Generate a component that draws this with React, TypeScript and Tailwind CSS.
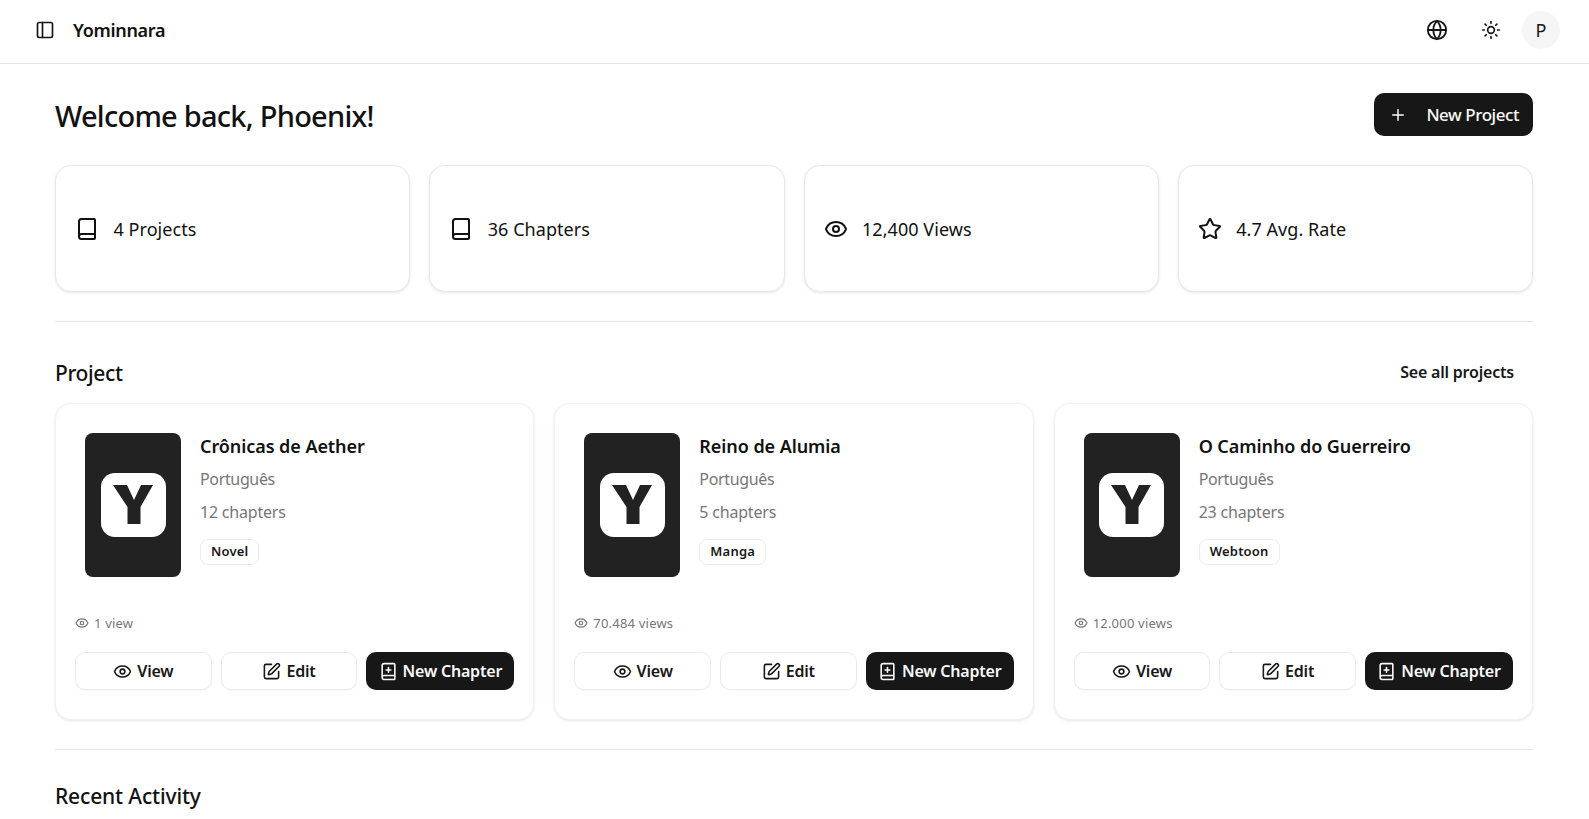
import { PanelLeft, Globe, Sun, Plus, Book, Eye, Star, SquarePen, BookPlus } from "lucide-react";

const stats = [
  { Icon: Book, label: "4 Projects" },
  { Icon: Book, label: "36 Chapters" },
  { Icon: Eye, label: "12,400 Views" },
  { Icon: Star, label: "4.7 Avg. Rate" },
];

const projects = [
  { title: "Crônicas de Aether", chapters: "12 chapters", tag: "Novel", views: "1 view" },
  { title: "Reino de Alumia", chapters: "5 chapters", tag: "Manga", views: "70.484 views" },
  { title: "O Caminho do Guerreiro", chapters: "23 chapters", tag: "Webtoon", views: "12.000 views" },
];

function Cover() {
  return (
    <div className="flex h-[144px] w-[96px] shrink-0 items-center justify-center rounded-lg bg-[#222222]">
      <svg width="65" height="64" viewBox="0 0 65 64" aria-hidden="true">
        <rect width="65" height="64" rx="14" fill="#ffffff" />
        <polygon points="12,12 26,12 33,27 40,12 52,12 39.5,34 39.5,51 26.5,51 26.5,34" fill="#222222" />
      </svg>
    </div>
  );
}

function ProjectCard({ title, chapters, tag, views }: { title: string; chapters: string; tag: string; views: string }) {
  return (
    <div className="flex h-[317px] flex-col rounded-2xl border border-[#f2f2f2] bg-white px-[19px] pb-[29px] pt-[29px] shadow-[0_1px_3px_rgba(0,0,0,0.1)]">
      <div className="flex gap-[19px] pl-[10px]">
        <Cover />
        <div className="flex flex-col items-start">
          <h3 className="mt-[1px] text-[18px] leading-[24px] font-semibold tracking-[-0.07px] text-[#111111]">{title}</h3>
          <p className="mt-[9px] text-[16px] leading-[24px] tracking-[-0.35px] text-[#77757a]">Português</p>
          <p className="mt-[9px] text-[16px] leading-[24px] tracking-[-0.2px] text-[#77757a]">{chapters}</p>
          <span className="mt-[15px] flex h-[26px] items-center rounded-lg border border-[#ebebeb] px-[10px] text-[13px] font-semibold tracking-[0.2px] text-[#171717]">
            {tag}
          </span>
        </div>
      </div>
      <div className="mt-auto flex items-center gap-[5px] text-[13px] leading-[18px] tracking-[0.2px] text-[#77757a]">
        <Eye size={14} strokeWidth={2} />
        <span>{views}</span>
      </div>
      <div className="mt-[20px] flex gap-[9px]">
        <button className="flex h-[38px] flex-1 items-center justify-center gap-[5px] rounded-[10px] border border-[#ebebeb] bg-white text-[16px] font-semibold tracking-[-0.2px] text-[#171717] shadow-[0_1px_1px_rgba(0,0,0,0.03)]">
          <Eye size={19} strokeWidth={2} />
          View
        </button>
        <button className="flex h-[38px] flex-1 items-center justify-center gap-[5px] rounded-[10px] border border-[#ebebeb] bg-white text-[16px] font-semibold tracking-[-0.2px] text-[#171717] shadow-[0_1px_1px_rgba(0,0,0,0.03)]">
          <SquarePen size={19} strokeWidth={2} />
          Edit
        </button>
        <button className="flex h-[38px] w-[148px] shrink-0 items-center justify-center gap-[5px] rounded-[10px] bg-[#171717] text-[16px] font-semibold tracking-[-0.2px] whitespace-nowrap text-[#fafafa]">
          <BookPlus size={19} strokeWidth={2} />
          New Chapter
        </button>
      </div>
    </div>
  );
}

export default function App() {
  return (
    <div className="h-screen overflow-hidden bg-white font-['Noto_Sans',sans-serif] text-[#111111]">
      <header className="flex h-16 items-center justify-between border-b border-[#e5e5e5] pb-[3px] pl-[35px] pr-[29px]">
        <div className="flex items-center gap-[18px]">
          <PanelLeft size={20} strokeWidth={2} className="text-[#171717]" />
          <span className="text-[18px] font-semibold tracking-[-0.3px]">Yominnara</span>
        </div>
        <div className="flex items-center">
          <Globe size={22} strokeWidth={2} className="text-[#171717]" />
          <Sun size={20} strokeWidth={2} className="ml-[33px] text-[#171717]" />
          <div className="ml-[21px] flex h-[38px] w-[38px] items-center justify-center rounded-full bg-[#f5f5f5] text-[18px] text-[#171717]">P</div>
        </div>
      </header>
      <main className="pl-[55px] pr-14">
        <div className="flex items-center justify-between pt-[29px]">
          <h1 className="translate-y-[1px] text-[29px] leading-[43px] font-medium tracking-[-0.75px]">Welcome back, Phoenix!</h1>
          <button className="flex h-[43px] w-[159px] items-center justify-between rounded-[10px] bg-[#171717] pl-[15px] pr-[14px] text-[17px] font-medium tracking-[-0.45px] text-[#fafafa]">
            <Plus size={18} strokeWidth={2} />
            New Project
          </button>
        </div>
        <div className="mt-[29px] grid grid-cols-4 gap-[19px]">
          {stats.map(({ Icon, label }) => (
            <div key={label} className="flex h-[127px] items-center gap-[14.5px] rounded-2xl border border-[#e8e8e8] bg-white px-[19px] shadow-[0_1px_3px_rgba(0,0,0,0.1)]">
              <Icon size={24} strokeWidth={2} className="shrink-0 text-[#111111]" />
              <span className="translate-y-[1px] text-[18px] tracking-[0.05px]">{label}</span>
            </div>
          ))}
        </div>
        <div className="mt-[29px] border-t border-[#e5e5e5]" />
        <div className="mt-[37px] flex items-center justify-between pr-[19px]">
          <h2 className="text-[21px] leading-[28px] font-medium tracking-[-0.35px]">Project</h2>
          <span className="-translate-y-[1px] text-[16px] font-semibold tracking-[-0.2px] text-[#171717]">See all projects</span>
        </div>
        <div className="mt-[16px] grid grid-cols-3 gap-5">
          {projects.map((p) => (
            <ProjectCard key={p.title} {...p} />
          ))}
        </div>
        <div className="mt-[29px] border-t border-[#e5e5e5]" />
        <h2 className="mt-[32px] text-[21px] leading-[28px] font-medium tracking-[-0.15px]">Recent Activity</h2>
      </main>
    </div>
  );
}
